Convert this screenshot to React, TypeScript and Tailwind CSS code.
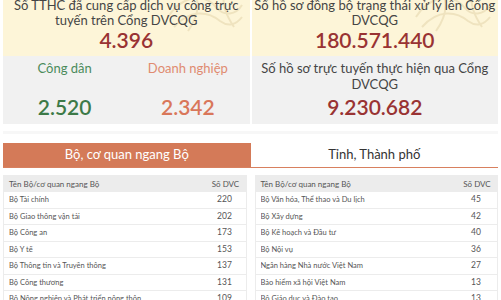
const ministries = [
  { name: "Bộ Tài chính", count: 220 },
  { name: "Bộ Giao thông vận tải", count: 202 },
  { name: "Bộ Công an", count: 173 },
  { name: "Bộ Y tế", count: 153 },
  { name: "Bộ Thông tin và Truyền thông", count: 137 },
  { name: "Bộ Công thương", count: 131 },
  { name: "Bộ Nông nghiệp và Phát triển nông thôn", count: 109 },
];

const ministries2 = [
  { name: "Bộ Văn hóa, Thể thao và Du lịch", count: 45 },
  { name: "Bộ Xây dựng", count: 42 },
  { name: "Bộ Kế hoạch và Đầu tư", count: 40 },
  { name: "Bộ Nội vụ", count: 36 },
  { name: "Ngân hàng Nhà nước Việt Nam", count: 27 },
  { name: "Bảo hiểm xã hội Việt Nam", count: 13 },
  { name: "Bộ Giáo dục và Đào tạo", count: 13 },
];

function Watermark() {
  return (
    <svg
      className="pointer-events-none absolute right-[6px] top-[-6px]"
      width="80"
      height="50"
      viewBox="0 0 80 50"
      fill="none"
      stroke="#efe3bf"
      strokeWidth="2"
    >
      <path d="M4 30 C 18 8, 40 6, 52 20 C 60 30, 72 28, 78 18" />
      <path d="M10 40 C 26 22, 44 24, 56 34 C 64 40, 72 38, 78 30" />
      <path d="M30 4 C 36 16, 34 30, 24 44" />
      <path d="M60 6 C 58 18, 62 28, 70 40" />
    </svg>
  );
}

function DvcTable({ rows }: { rows: { name: string; count: number }[] }) {
  return (
    <div className="border border-[#ececec] text-[8px] text-[#555]">
      <div className="flex h-[16px] items-center bg-[#ececec] pl-[5px]">
        <div className="flex-1">Tên Bộ/cơ quan ngang Bộ</div>
        <div className="w-[40px] text-center">Số DVC</div>
      </div>
      {rows.map((row) => (
        <div
          key={row.name}
          className="flex h-[16.5px] items-center border-b border-[#ececec] bg-white pl-[5px]"
        >
          <div className="flex-1 truncate text-[7.5px]">{row.name}</div>
          <div className="w-[40px] pr-[2px] text-center text-[8.5px]">{row.count}</div>
        </div>
      ))}
    </div>
  );
}

export default function App() {
  return (
    <div
      className="h-[300px] w-[501px] overflow-hidden bg-white"
      style={{ fontFamily: 'Lato, "Open Sans", "Liberation Sans", sans-serif' }}
    >
      {/* stats */}
      <div className="-mt-[7px] grid grid-cols-2 gap-x-[2px] px-[3px] text-center text-[#454545]">
        <div className="flex flex-col">
          <div className="relative overflow-hidden bg-[#fdf5d8] pb-[4px] pt-[5px]">
            <Watermark />
            <div className="relative text-[13px] leading-[15px]">
              Số TTHC đã cung cấp dịch vụ công trực
              <br />
              tuyến trên Cổng DVCQG
            </div>
            <div className="relative text-[21px] font-semibold leading-[24px] text-[#993333]">
              4.396
            </div>
          </div>
          <div className="grid h-[68px] grid-cols-2 bg-[#f1f1f1] pb-[5px] pt-[4px]">
            <div className="flex flex-col justify-between">
              <div className="text-[13px] leading-[16px] text-[#4b8b5b]">Công dân</div>
              <div className="text-[21px] font-semibold leading-[24px] text-[#3d7a48]">
                2.520
              </div>
            </div>
            <div className="flex flex-col justify-between">
              <div className="text-[13px] leading-[16px] text-[#e08b70]">Doanh nghiệp</div>
              <div className="text-[21px] font-semibold leading-[24px] text-[#d9775a]">
                2.342
              </div>
            </div>
          </div>
        </div>
        <div className="flex flex-col">
          <div className="relative overflow-hidden bg-[#fdf5d8] pb-[4px] pt-[5px]">
            <Watermark />
            <div className="relative text-[13px] leading-[15px]">
              Số hồ sơ đồng bộ trạng thái xử lý lên Cổng
              <br />
              DVCQG
            </div>
            <div className="relative text-[21px] font-semibold leading-[24px] text-[#993333]">
              180.571.440
            </div>
          </div>
          <div className="flex h-[68px] flex-col bg-[#f1f1f1] pb-[5px] pt-[4px]">
            <div className="text-[13px] leading-[16px]">
              Số hồ sơ trực tuyến thực hiện qua Cổng
              <br />
              DVCQG
            </div>
            <div className="mt-[3px] text-[21px] font-semibold leading-[24px] text-[#993333]">
              9.230.682
            </div>
          </div>
        </div>
      </div>

      <div className="mx-[3px] mt-[7px] h-[3px] bg-[#f7f7f7]" />

      {/* tabs */}
      <div className="mx-[3px] mt-[9px] grid grid-cols-2 border-b border-[#d8805f] text-[13px]">
        <div className="flex h-[24px] items-center justify-center bg-[#d47a58] text-white">
          Bộ, cơ quan ngang Bộ
        </div>
        <div className="flex h-[24px] items-center justify-center text-[#333]">
          Tỉnh, Thành phố
        </div>
      </div>

      {/* tables */}
      <div className="mt-[7px] grid grid-cols-2 gap-x-[8px] px-[3px]">
        <DvcTable rows={ministries} />
        <DvcTable rows={ministries2} />
      </div>
    </div>
  );
}
